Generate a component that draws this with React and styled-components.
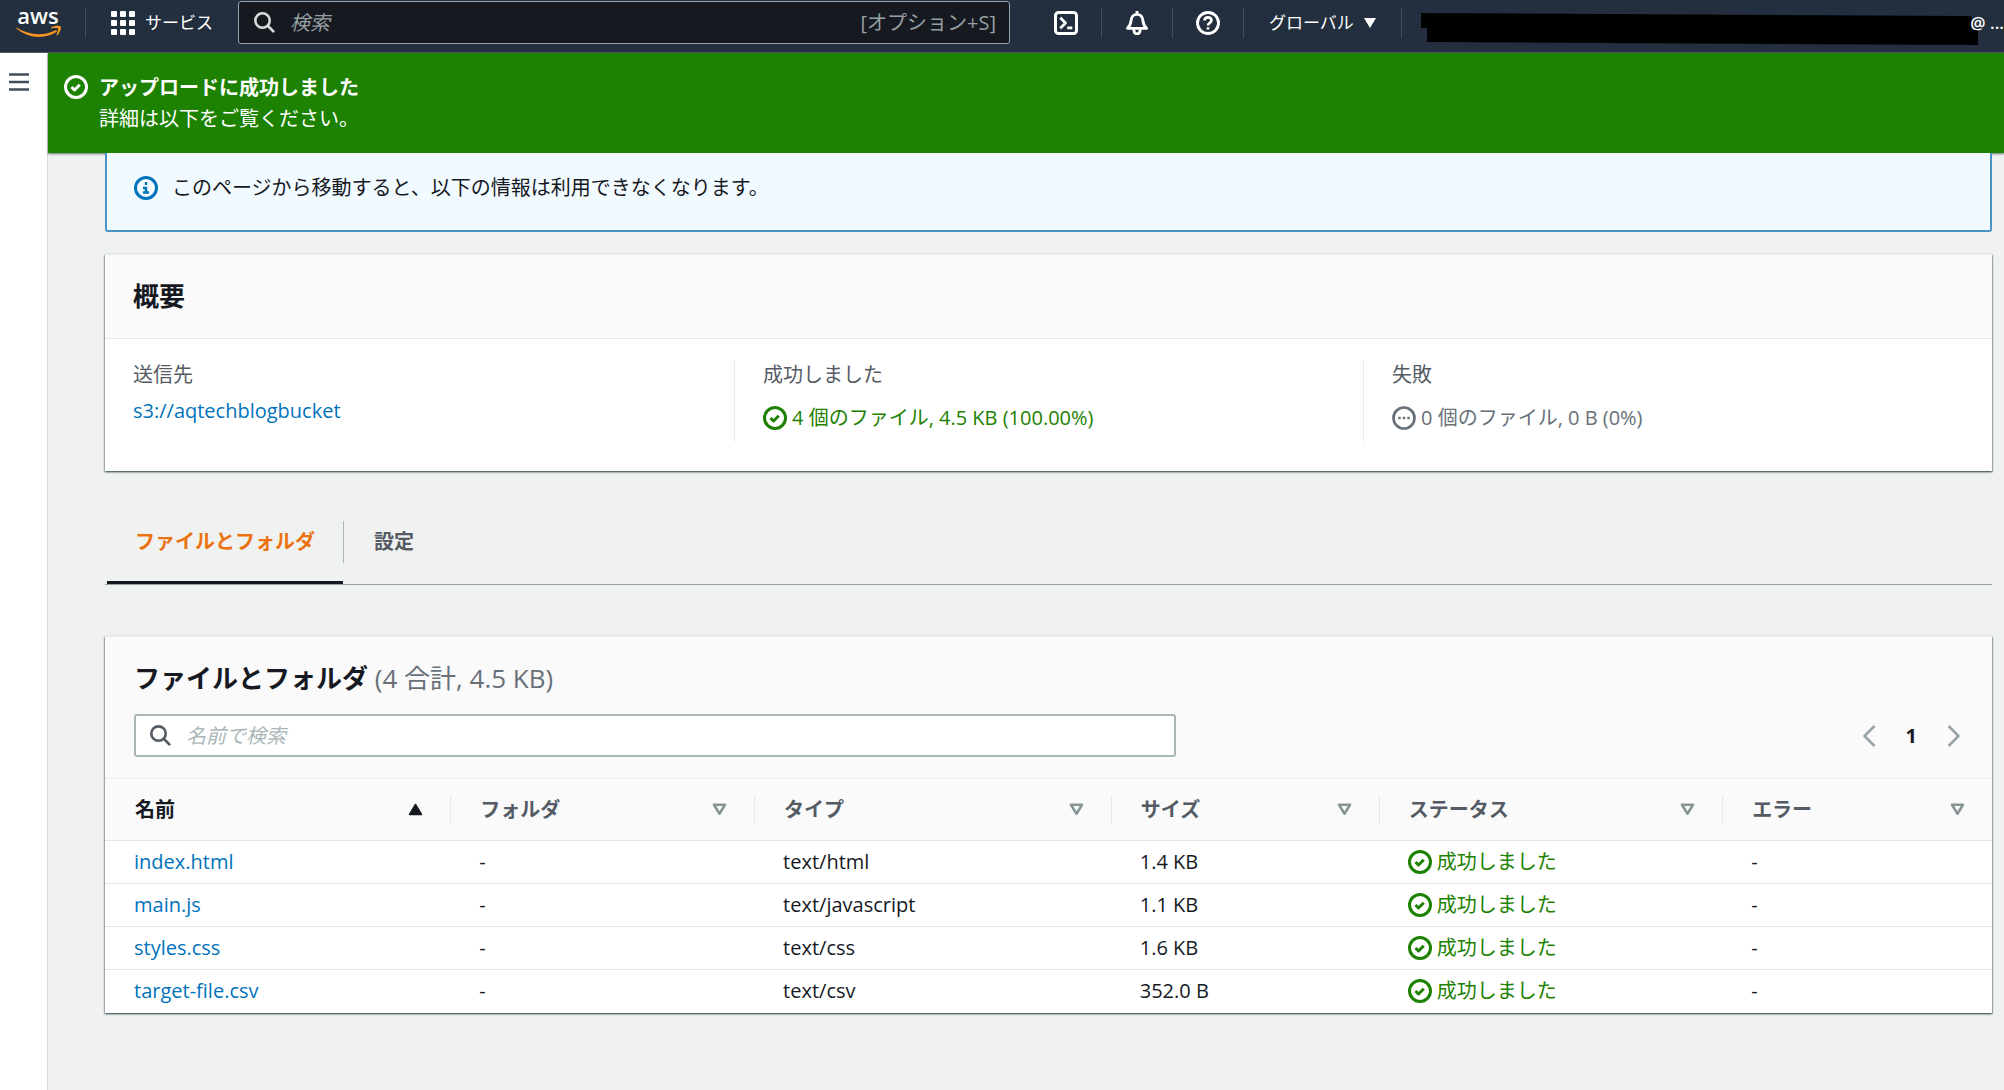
import React from 'react'
import styled, { createGlobalStyle } from 'styled-components'

const GlobalStyle = createGlobalStyle`
  * {
    box-sizing: border-box;
  }

  body {
    margin: 0;
    background: #f0f2f2;
    color: #16191f;
    font-family: 'Open Sans', 'Noto Sans CJK JP', sans-serif;
    font-size: 20px;
    line-height: 28px;
  }

  button,
  input {
    font: inherit;
    color: inherit;
  }

  button {
    padding: 0;
    border: 0;
    background: none;
    cursor: pointer;
  }
`

const Svg = styled.svg`
  display: block;
  flex: none;
  fill: none;
  stroke: currentColor;
  stroke-width: 2;
  stroke-linejoin: round;
`

const Icon = ({ size = 24, children }) => (
  <Svg width={size} height={size} viewBox="0 0 16 16" aria-hidden="true">
    {children}
  </Svg>
)

const CheckIcon = () => (
  <Icon>
    <circle cx="8" cy="8" r="7" />
    <path d="m5 8 2 2 3.5-3.5" />
  </Icon>
)

const InfoIcon = () => (
  <Icon>
    <circle cx="8" cy="8" r="7" />
    <path d="M8 11V8H6M10 11H6M8 6V4" strokeWidth="1.6" strokeLinejoin="miter" />
  </Icon>
)

const PendingIcon = () => (
  <Icon>
    <circle cx="8" cy="8" r="7" strokeWidth="1.8" />
    <path d="M4.2 8h1.6M7.2 8h1.6M10.2 8h1.6" strokeWidth="1.6" />
  </Icon>
)

const SearchIcon = ({ size }) => (
  <Icon size={size}>
    <circle cx="6.5" cy="6.5" r="5.5" />
    <path d="m10.5 10.5 4.8 4.8" />
  </Icon>
)

const TerminalIcon = () => (
  <Icon>
    <rect x="1" y="1" width="14" height="14" rx="2" />
    <path d="m4.2 4.5 3.5 3.5-3.5 3.5M8.8 11.2h3.4" strokeWidth="1.8" />
  </Icon>
)

const BellIcon = () => (
  <Icon>
    <path
      d="M8 0v2M1.6 11.6h12.8c-1.5-1.4-2.2-2.6-2.4-5C11.8 3.9 10.2 2.2 8 2.2S4.2 3.9 4 6.6c-.2 2.4-.9 3.600-2.400 5z"
      strokeWidth="1.9"
    />
    <path d="M6 12.2v1a2 2 0 0 0 4 0v-1" strokeWidth="1.9" />
  </Icon>
)

const HelpIcon = () => (
  <Icon>
    <circle cx="8" cy="8" r="7" strokeWidth="1.9" />
    <path
      d="M5.7 6.4C5.7 5 6.7 4.2 8 4.2s2.3.8 2.3 2.1C10.3 7.9 8 7.9 8 9.6M8 10.8v1.6"
      strokeWidth="1.8"
    />
  </Icon>
)

const GridIcon = () => (
  <Svg width="24" height="24" viewBox="0 0 24 24" aria-hidden="true">
    {[0, 9, 18].map(y =>
      [0, 9, 18].map(x => (
        <rect
          key={`${x}-${y}`}
          x={x}
          y={y}
          width="6"
          height="6"
          rx="1"
          fill="currentColor"
          stroke="none"
        />
      ))
    )}
  </Svg>
)

const MenuIcon = () => (
  <Svg width="20" height="18" viewBox="0 0 20 18" aria-hidden="true">
    <path d="M0 1.5h20M0 9h20M0 16.5h20" strokeWidth="2.5" />
  </Svg>
)

const ChevronIcon = ({ next }) => (
  <Svg width="14" height="22" viewBox="0 0 14 22" aria-hidden="true">
    <path d={next ? 'm1.5 1 10 10-10 10' : 'm12.5 1-10 10 10 10'} strokeWidth="2.5" />
  </Svg>
)

const SortIcon = ({ active }) => (
  <Svg width="15" height="13" viewBox="0 0 15 13" aria-hidden="true">
    {active ? (
      <path d="M1.500 11.5h12l-6-10z" fill="currentColor" strokeWidth="1.5" />
    ) : (
      <path d="M2 1.700h11l-5.500 9z" strokeWidth="2.600" />
    )}
  </Svg>
)

const AwsLogo = () => (
  <svg width="46" height="38" viewBox="0 -7 46 38" role="img" aria-label="AWS">
    <text
      x="22"
      y="17"
      textAnchor="middle"
      fill="#fff"
      fontFamily="Open Sans, sans-serif"
      fontSize="22"
      fontWeight="600"
    >
      aws
    </text>
    <path d="M.6 20.5c13 8.5 28 8.5 39.5 2.4l1 1.7C29 33 12 31.5.2 21.3z" fill="#f79520" />
    <path
      d="M35 20.7c3-2.1 8.5-2.4 9.6-1.3 1 1.3-.5 6.3-3.3 8.8-.6.5-1 .2-.7-.5.9-2.2 1.9-5.3 1.3-6.1-.7-.8-4.3-.4-6.2-.2-.7 0-.9-.4-.7-.7z"
      fill="#f79520"
    />
  </svg>
)

const TopBar = styled.header`
  display: flex;
  align-items: flex-start;
  height: 53px;
  background: #232f3e;
  border-bottom: 1px solid #505b66;
  color: #fff;
`

const LogoLink = styled.a`
  display: block;
  padding: 0 23px 0 16px;
  line-height: 0;
`

const TopDivider = styled.span`
  flex: none;
  width: 1px;
  height: 31px;
  margin-top: 7px;
  background: #414d5c;
`

const TopButton = styled.button`
  display: flex;
  align-items: center;
  justify-content: center;
  flex: none;
  gap: 10px;
  height: 46px;
  padding: 0 ${({ $wide }) => ($wide ? 25 : 23)}px;
  font-size: 17px;
`

const TopSearch = styled.label`
  display: flex;
  align-items: center;
  flex: 0 1 772px;
  min-width: 0;
  height: 43px;
  margin: 1px 21px 0 0;
  padding: 0 13px 0 15px;
  background: #16191f;
  border: 1px solid #9ba4ad;
  border-radius: 3px;
  color: #d5dbdb;
`

const SearchInput = styled.input`
  flex: 1;
  min-width: 0;
  height: 38px;
  margin-left: 15px;
  padding: 0;
  border: 0;
  outline: 0;
  background: none;

  &::placeholder {
    color: ${({ $placeholder }) => $placeholder};
    font-style: italic;
    opacity: 1;
  }
`

const Shortcut = styled.span`
  color: #95a0a3;
`

const Caret = styled.span`
  width: 0;
  border: 6px solid transparent;
  border-top: 10px solid #fff;
  border-bottom: 0;
`

const Account = styled.button`
  display: flex;
  align-items: center;
  flex: 1;
  min-width: 0;
  height: 46px;
  padding-left: 19px;
  font-size: 17px;
  font-weight: 600;
  white-space: nowrap;
`

const Redaction = styled.svg`
  flex: 1;
  min-width: 0;
  height: 46px;
  margin-right: -8px;
`

const Body = styled.div`
  display: flex;
  min-height: calc(100vh - 53px);
`

const SideRail = styled.nav`
  flex: none;
  width: 48px;
  padding: 20px 9px;
  background: #fff;
  border-right: 1px solid #d5dbdb;
  color: #414d5c;
`

const MenuButton = styled.button`
  display: block;
`

const Main = styled.main`
  flex: 1;
  min-width: 0;
`

const Flash = styled.div`
  display: flex;
  gap: 11px;
  padding: 19px 16px;
  background: #1d8102;
  box-shadow: 0 1px 2px rgba(0, 28, 36, 0.6);
  color: #fff;

  svg {
    margin-top: 3px;
  }
`

const FlashText = styled.p`
  margin: 0;
  line-height: 31px;
  font-weight: ${({ $bold }) => ($bold ? 700 : 400)};
`

const Content = styled.div`
  padding: 0 12px 48px 57px;
`

const InfoAlert = styled.div`
  display: flex;
  align-items: center;
  gap: 14px;
  height: 79px;
  padding: 0 27px 8px;
  background: #f1faff;
  border: 2px solid #4a93c8;
  border-top: 0;
  border-radius: 0 0 3px 3px;

  svg {
    color: #0073bb;
  }
`

const Card = styled.section`
  background: #fff;
  border-top: 1px solid #eaeded;
  box-shadow: 0 1px 2px rgba(0, 28, 36, 0.7), 1px 1px 1px rgba(0, 28, 36, 0.15),
    -1px 1px 1px rgba(0, 28, 36, 0.15);
`

const SummaryCard = styled(Card)`
  margin-top: 22px;
`

const SummaryHeader = styled.div`
  padding: 25px 28px 26px;
  background: #fafafa;
  border-bottom: 1px solid #e5e8e8;
`

const CardTitle = styled.h2`
  margin: 0;
  font-size: 26px;
  line-height: 32px;
  font-weight: 700;
`

const TitleCount = styled.span`
  color: #687078;
  font-weight: 400;
`

const SummaryGrid = styled.div`
  display: grid;
  grid-template-columns: repeat(3, 1fr);
  padding: 21px 0 29px;
`

const SummaryItem = styled.div`
  display: flex;
  flex-direction: column;
  gap: 8px;
  height: 82px;
  padding: 1px 28px;

  & + & {
    border-left: 1px solid #eaeded;
  }
`

const SummaryLabel = styled.div`
  color: #545b64;
`

const Status = styled.span`
  display: flex;
  align-items: center;
  gap: 5px;
  min-height: ${({ $tall }) => ($tall ? '42px' : '28px')};
  color: ${({ $pending }) => ($pending ? '#687078' : '#1d8102')};
`

const Link = styled.a`
  color: #0073bb;
  text-decoration: none;
`

const Tabs = styled.div`
  display: flex;
  margin: 50px 0 51px;
  padding-left: 2px;
  border-bottom: 1px solid #95a5a6;
`

const Tab = styled.button`
  padding-bottom: 18px;
  border-bottom: 3px solid ${({ $active }) => ($active ? '#16191f' : 'transparent')};
  color: ${({ $active }) => ($active ? '#ec7211' : '#545b64')};
  font-weight: 700;
`

const TabLabel = styled.span`
  display: block;
  padding: 0 28px;
  line-height: 42px;
`

const DividedTabLabel = styled(TabLabel)`
  padding-left: 30px;
  border-left: 1px solid #aab7b8;
`

const TableHeader = styled.div`
  padding: 25px 29px 21px;
  background: #fafafa;
  border-bottom: 1px solid #eaeded;
`

const Toolbar = styled.div`
  display: flex;
  align-items: center;
  justify-content: space-between;
  gap: 28px;
  margin-top: 20px;
`

const FilterBox = styled.label`
  display: flex;
  align-items: center;
  flex: 0 1 1042px;
  min-width: 0;
  height: 43px;
  padding: 0 14px;
  background: #fff;
  border: 2px solid #aab7b8;
  border-radius: 3px;
  color: #545b64;
`

const Pagination = styled.div`
  display: flex;
  align-items: center;
  gap: 28px;
  color: #95a5a6;

  svg {
    margin: 0 2px;
  }
`

const PageNumber = styled.button`
  color: #16191f;
  font-weight: 700;
`

const FileTable = styled.table`
  width: 100%;
  border-collapse: separate;
  border-spacing: 0;
  table-layout: fixed;
`

const HeadCell = styled.th`
  width: ${({ $share }) => $share}%;
  height: 62px;
  padding: 0;
  background: #fafafa;
  border-bottom: 1px solid #e5e8e8;
`

const SortButton = styled.button`
  display: flex;
  align-items: center;
  justify-content: space-between;
  width: 100%;
  height: 30px;
  padding: 0 27px 0 29px;
  border-left: 1px solid ${({ $divided }) => ($divided ? '#e5e8e8' : 'transparent')};
  color: ${({ $active }) => ($active ? '#16191f' : '#545b64')};
  font-weight: 700;

  svg {
    color: ${({ $active }) => ($active ? '#16191f' : '#879596')};
  }
`

const Cell = styled.td`
  height: 43px;
  padding: 0 29px;
  border-bottom: 1px solid #e5e8e8;

  tr:last-child & {
    border-bottom-color: transparent;
  }
`

const columns = [
  { title: '名前', share: 18.3, active: true },
  { title: 'フォルダ', share: 16.1 },
  { title: 'タイプ', share: 18.9 },
  { title: 'サイズ', share: 14.2 },
  { title: 'ステータス', share: 18.2 },
  { title: 'エラー', share: 14.3 }
]

const files = [
  { name: 'index.html', type: 'text/html', size: '1.4 KB' },
  { name: 'main.js', type: 'text/javascript', size: '1.1 KB' },
  { name: 'styles.css', type: 'text/css', size: '1.6 KB' },
  { name: 'target-file.csv', type: 'text/csv', size: '352.0 B' }
]

const Navigation = () => (
  <TopBar>
    <LogoLink href="#home">
      <AwsLogo />
    </LogoLink>
    <TopDivider />
    <TopButton $wide>
      <GridIcon />
      サービス
    </TopButton>
    <TopSearch>
      <SearchIcon size={21} />
      <SearchInput
        type="search"
        placeholder="検索"
        aria-label="検索"
        $placeholder="#95a0a3"
      />
      <Shortcut>[オプション+S]</Shortcut>
    </TopSearch>
    <TopButton aria-label="CloudShell">
      <TerminalIcon />
    </TopButton>
    <TopDivider />
    <TopButton aria-label="通知">
      <BellIcon />
    </TopButton>
    <TopDivider />
    <TopButton aria-label="ヘルプ">
      <HelpIcon />
    </TopButton>
    <TopDivider />
    <TopButton $wide>
      グローバル
      <Caret />
    </TopButton>
    <TopDivider />
    <Account>
      <Redaction viewBox="0 0 556 46" preserveAspectRatio="none" aria-hidden="true">
        <path d="M0 13 549 16V30H556V45L6 42V28H0z" fill="#000" />
      </Redaction>
      @ ...
    </Account>
  </TopBar>
)

const Summary = () => (
  <SummaryCard>
    <SummaryHeader>
      <CardTitle>概要</CardTitle>
    </SummaryHeader>
    <SummaryGrid>
      <SummaryItem>
        <SummaryLabel>送信先</SummaryLabel>
        <div>
          <Link href="#bucket">s3://aqtechblogbucket</Link>
        </div>
      </SummaryItem>
      <SummaryItem>
        <SummaryLabel>成功しました</SummaryLabel>
        <Status $tall>
          <CheckIcon />4 個のファイル, 4.5 KB (100.00%)
        </Status>
      </SummaryItem>
      <SummaryItem>
        <SummaryLabel>失敗</SummaryLabel>
        <Status $tall $pending>
          <PendingIcon />0 個のファイル, 0 B (0%)
        </Status>
      </SummaryItem>
    </SummaryGrid>
  </SummaryCard>
)

const Files = () => (
  <Card>
    <TableHeader>
      <CardTitle>
        ファイルとフォルダ <TitleCount>(4 合計, 4.5 KB)</TitleCount>
      </CardTitle>
      <Toolbar>
        <FilterBox>
          <SearchIcon size={21} />
          <SearchInput
            type="search"
            placeholder="名前で検索"
            aria-label="名前で検索"
            $placeholder="#aab7b8"
          />
        </FilterBox>
        <Pagination>
          <button aria-label="前のページ">
            <ChevronIcon />
          </button>
          <PageNumber>1</PageNumber>
          <button aria-label="次のページ">
            <ChevronIcon next />
          </button>
        </Pagination>
      </Toolbar>
    </TableHeader>
    <FileTable>
      <thead>
        <tr>
          {columns.map(({ title, share, active }, index) => (
            <HeadCell key={title} scope="col" $share={share}>
              <SortButton $active={active} $divided={index > 0}>
                {title}
                <SortIcon active={active} />
              </SortButton>
            </HeadCell>
          ))}
        </tr>
      </thead>
      <tbody>
        {files.map(({ name, type, size }) => (
          <tr key={name}>
            <Cell>
              <Link href={`#${name}`}>{name}</Link>
            </Cell>
            <Cell>-</Cell>
            <Cell>{type}</Cell>
            <Cell>{size}</Cell>
            <Cell>
              <Status>
                <CheckIcon />
                成功しました
              </Status>
            </Cell>
            <Cell>-</Cell>
          </tr>
        ))}
      </tbody>
    </FileTable>
  </Card>
)

const App = () => {
  return (
    <>
      <GlobalStyle />
      <Navigation />
      <Body>
        <SideRail>
          <MenuButton aria-label="メニュー">
            <MenuIcon />
          </MenuButton>
        </SideRail>
        <Main>
          <Flash role="status">
            <CheckIcon />
            <div>
              <FlashText $bold>アップロードに成功しました</FlashText>
              <FlashText>詳細は以下をご覧ください。</FlashText>
            </div>
          </Flash>
          <Content>
            <InfoAlert>
              <InfoIcon />
              このページから移動すると、以下の情報は利用できなくなります。
            </InfoAlert>
            <Summary />
            <Tabs role="tablist">
              <Tab role="tab" aria-selected="true" $active>
                <TabLabel>ファイルとフォルダ</TabLabel>
              </Tab>
              <Tab role="tab" aria-selected="false">
                <DividedTabLabel>設定</DividedTabLabel>
              </Tab>
            </Tabs>
            <Files />
          </Content>
        </Main>
      </Body>
    </>
  )
}

export default App
